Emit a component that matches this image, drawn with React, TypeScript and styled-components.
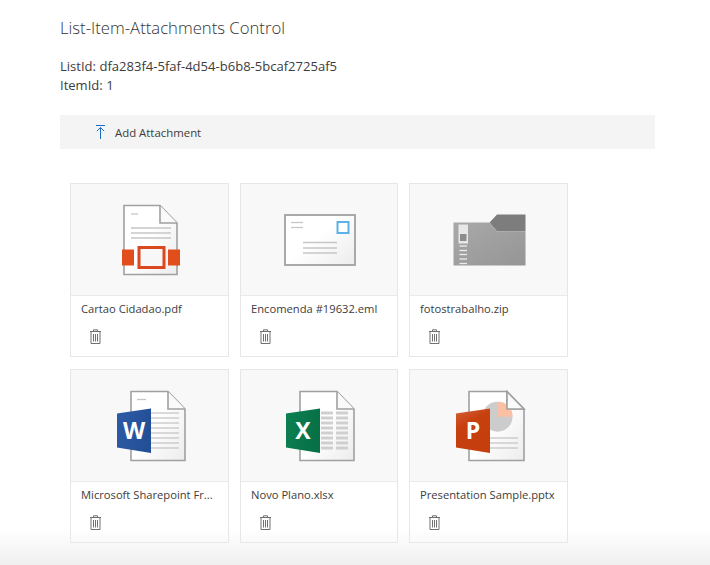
import styled, { createGlobalStyle } from "styled-components";
import { ReactNode } from "react";

const GlobalStyle = createGlobalStyle`
  html, body {
    margin: 0;
    padding: 0;
    background: #fff;
    font-family: "Open Sans", "Liberation Sans", sans-serif;
    color: #333;
  }
`;

const Page = styled.div`
  width: 710px;
  height: 565px;
  box-sizing: border-box;
  padding: 16px 55px 0 60px;
  overflow: hidden;
  position: relative;
`;

const Title = styled.h1`
  margin: 0;
  font-size: 16.7px;
  line-height: 23px;
  font-weight: 300;
  color: #333;
`;

const Info = styled.div`
  margin-top: 18px;
  font-size: 13.05px;
  line-height: 19px;
  color: #3c3c3c;
`;

const Toolbar = styled.div`
  margin-top: 20px;
  height: 34px;
  background: #f4f4f4;
  display: flex;
  align-items: center;
  padding-left: 36px;
`;

const AddButton = styled.button`
  display: flex;
  align-items: center;
  gap: 10px;
  border: 0;
  padding: 0;
  background: none;
  font-family: inherit;
  font-size: 11.4px;
  color: #3c3c3c;
`;

const Grid = styled.div`
  margin: 34px 0 0 10px;
  display: grid;
  grid-template-columns: 159px 158px 159px;
  column-gap: 11px;
  row-gap: 12px;
`;

const Card = styled.div`
  height: 174px;
  box-sizing: border-box;
  border: 1px solid #e6e6e6;
  display: flex;
  flex-direction: column;
`;

const Preview = styled.div`
  height: 111px;
  flex: none;
  background: #f8f8f8;
  border-bottom: 1px solid #eaeaea;
  display: flex;
  align-items: center;
  justify-content: center;
`;

const FileName = styled.div`
  margin: 5px 10px 0;
  font-size: 11.2px;
  line-height: 16px;
  color: #3c3c3c;
  white-space: nowrap;
  overflow: hidden;
`;

const DeleteButton = styled.button`
  margin: 12px 0 0 19px;
  width: 11px;
  height: 15px;
  padding: 0;
  border: 0;
  background: none;
  display: flex;
`;

const BottomFade = styled.div`
  position: absolute;
  left: 0;
  right: 0;
  bottom: 0;
  height: 36px;
  background: linear-gradient(rgba(238, 238, 238, 0), rgba(238, 238, 238, 0.9));
  pointer-events: none;
`;

const DocLines = ({ x1, x2, ys, color = "#c6c6c6" }: { x1: number; x2: number; ys: number[]; color?: string }) => (
  <>
    {ys.map((y) => (
      <line key={y} x1={x1} x2={x2} y1={y} y2={y} stroke={color} strokeWidth="1.3" />
    ))}
  </>
);

// gradients used by the file icons, rendered once per page
const IconDefs = () => (
  <svg width="0" height="0" style={{ position: "absolute" }}>
    <defs>
      <linearGradient id="paper" x1="0.4" y1="0.5" x2="1" y2="1">
        <stop offset="0" stopColor="#ffffff" />
        <stop offset="1" stopColor="#ececec" />
      </linearGradient>
      <linearGradient id="zipBody" x1="0" y1="0" x2="1" y2="1">
        <stop offset="0" stopColor="#a9a9a9" />
        <stop offset="1" stopColor="#959595" />
      </linearGradient>
      <linearGradient id="badgeBlue" x1="0" y1="0" x2="1" y2="0.3">
        <stop offset="0" stopColor="#2d5ca6" />
        <stop offset="1" stopColor="#234f96" />
      </linearGradient>
      <linearGradient id="badgeGreen" x1="0" y1="0" x2="1" y2="0.3">
        <stop offset="0" stopColor="#0b8152" />
        <stop offset="1" stopColor="#087046" />
      </linearGradient>
      <linearGradient id="badgeRed" x1="0" y1="0" x2="0.4" y2="1">
        <stop offset="0" stopColor="#d2623a" />
        <stop offset="0.4" stopColor="#c8400f" />
        <stop offset="1" stopColor="#c43e0e" />
      </linearGradient>
    </defs>
  </svg>
);

// page with a folded corner, shared by the document icons
const Sheet = ({ left, right }: { left: number; right: number }) => (
  <>
    <path
      d={`M${left} 13.5H${right - 17}L${right} 31V82.5H${left}Z`}
      fill="url(#paper)"
      stroke="#a0a0a0"
      strokeWidth="1.6"
    />
    <path d={`M${right - 17} 13.5V31H${right}`} fill="#fafafa" stroke="#a0a0a0" strokeWidth="1.6" />
  </>
);

const Badge = ({ fill, letter }: { fill: string; letter: string }) => (
  <>
    <path d="M15 35.5L49 30.5V75L15 69.5Z" fill={`url(#${fill})`} />
    <text
      x="32"
      y="61"
      textAnchor="middle"
      fontFamily="'Open Sans', 'Liberation Sans', sans-serif"
      fontWeight="700"
      fontSize="23"
      fill="#fff"
    >
      {letter}
    </text>
  </>
);

const Icon = ({ children }: { children: ReactNode }) => (
  <svg width="96" height="96" viewBox="0 0 96 96">
    {children}
  </svg>
);

const PdfIcon = () => (
  <Icon>
    <Sheet left={22} right={75} />
    <DocLines x1={29} x2={36} ys={[22]} />
    <DocLines x1={29} x2={69} ys={[36, 41, 46]} />
    <rect x="20" y="57.5" width="12" height="16" fill="#e24d1c" />
    <rect x="66" y="57.5" width="12" height="16" fill="#e24d1c" />
    <rect x="37" y="55.5" width="25" height="20" fill="#f7f7f7" stroke="#d9481f" strokeWidth="3" />
  </Icon>
);

const MailIcon = () => (
  <Icon>
    <rect x="14" y="23" width="70" height="50" fill="url(#paper)" stroke="#a0a0a0" strokeWidth="1.8" />
    <DocLines x1={20} x2={32} ys={[30.5, 35.5]} />
    <DocLines x1={32} x2={66} ys={[50.5, 56, 61]} />
    <rect x="66.5" y="30" width="11" height="11" fill="#fff" stroke="#5cb1ea" strokeWidth="2" />
  </Icon>
);

const ZipIcon = () => (
  <Icon>
    <path d="M48.5 30.5L56 22.5H84.5V39.5H56Z" fill="#7d7d7d" />
    <path d="M12.5 30.5H48.5L56 39.5H84.5V73.5H12.5Z" fill="url(#zipBody)" />
    <rect x="17.5" y="32.5" width="9.5" height="19" fill="#e8e8e8" />
    <rect x="19" y="42" width="6.5" height="7" fill="#8c8c8c" />
    <DocLines x1={18.5} x2={26} ys={[54, 58.5, 62.5, 67, 71.5]} color="#ececec" />
  </Icon>
);

const WordIcon = () => (
  <Icon>
    <Sheet left={29} right={83} />
    <DocLines x1={35} x2={44} ys={[21.5]} />
    <DocLines x1={49} x2={77} ys={[35, 40, 45, 50, 55, 60, 65, 70]} />
    <Badge fill="badgeBlue" letter="W" />
  </Icon>
);

const ExcelIcon = () => (
  <Icon>
    <Sheet left={29} right={83} />
    {[35, 40, 45, 50, 55, 60, 65, 70].map((y) => (
      <g key={y}>
        <rect x="50" y={y - 1.5} width="12" height="3" fill="#cfcfcf" />
        <rect x="65" y={y - 1.5} width="12" height="3" fill="#cfcfcf" />
      </g>
    ))}
    <Badge fill="badgeGreen" letter="X" />
  </Icon>
);

const PowerPointIcon = () => (
  <Icon>
    <Sheet left={28} right={83} />
    <circle cx="56.5" cy="38.7" r="15" fill="#cccccc" />
    <path d="M56.5 38.7V23.7A15 15 0 0 1 71.5 38.7Z" fill="#fbbfa4" />
    <path d="M66 13.5V31H83L66 13.5Z" fill="#fafafa" stroke="#a0a0a0" strokeWidth="1.6" />
    <DocLines x1={49} x2={77} ys={[60, 65, 70]} />
    <Badge fill="badgeRed" letter="P" />
  </Icon>
);

const TrashIcon = () => (
  <svg width="11" height="15" viewBox="0 0 11 15" fill="none" stroke="#707070" strokeWidth="1">
    <path d="M0 2.5H11M3.5 2.5V0.8H7.5V2.5M1 2.5V14.5H10V2.5M3.5 5V12.5M5.5 5V12.5M7.5 5V12.5" />
  </svg>
);

const UploadIcon = () => (
  <svg width="9" height="14" viewBox="0 0 9 14" fill="none" stroke="#1b6ec2" strokeWidth="1">
    <path d="M0 0.5H9M4.5 14V2.5M0.8 6.2L4.5 2.5L8.2 6.2" />
  </svg>
);

const files = [
  { name: "Cartao Cidadao.pdf", icon: <PdfIcon /> },
  { name: "Encomenda #19632.eml", icon: <MailIcon /> },
  { name: "fotostrabalho.zip", icon: <ZipIcon /> },
  { name: "Microsoft Sharepoint Fr...", icon: <WordIcon /> },
  { name: "Novo Plano.xlsx", icon: <ExcelIcon /> },
  { name: "Presentation Sample.pptx", icon: <PowerPointIcon /> },
];

const App = () => (
  <Page>
    <GlobalStyle />
    <IconDefs />
    <Title>List-Item-Attachments Control</Title>
    <Info>
      <div>ListId: dfa283f4-5faf-4d54-b6b8-5bcaf2725af5</div>
      <div>ItemId: 1</div>
    </Info>
    <Toolbar>
      <AddButton>
        <UploadIcon />
        Add Attachment
      </AddButton>
    </Toolbar>
    <Grid>
      {files.map((file) => (
        <Card key={file.name}>
          <Preview>{file.icon}</Preview>
          <FileName>{file.name}</FileName>
          <DeleteButton>
            <TrashIcon />
          </DeleteButton>
        </Card>
      ))}
    </Grid>
    <BottomFade />
  </Page>
);

export default App;
